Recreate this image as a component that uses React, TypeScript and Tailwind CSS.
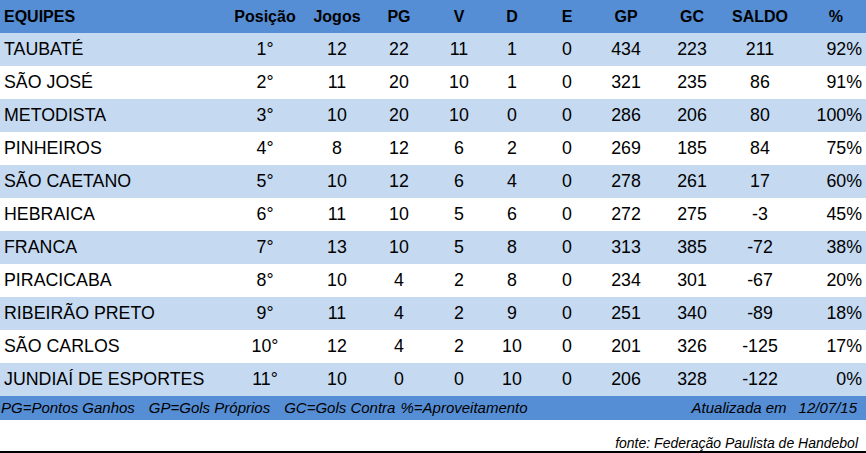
const rows = [
  ["TAUBATÉ", "1°", "12", "22", "11", "1", "0", "434", "223", "211", "92%"],
  ["SÃO JOSÉ", "2°", "11", "20", "10", "1", "0", "321", "235", "86", "91%"],
  ["METODISTA", "3°", "10", "20", "10", "0", "0", "286", "206", "80", "100%"],
  ["PINHEIROS", "4°", "8", "12", "6", "2", "0", "269", "185", "84", "75%"],
  ["SÃO CAETANO", "5°", "10", "12", "6", "4", "0", "278", "261", "17", "60%"],
  ["HEBRAICA", "6°", "11", "10", "5", "6", "0", "272", "275", "-3", "45%"],
  ["FRANCA", "7°", "13", "10", "5", "8", "0", "313", "385", "-72", "38%"],
  ["PIRACICABA", "8°", "10", "4", "2", "8", "0", "234", "301", "-67", "20%"],
  ["RIBEIRÃO PRETO", "9°", "11", "4", "2", "9", "0", "251", "340", "-89", "18%"],
  ["SÃO CARLOS", "10°", "12", "4", "2", "10", "0", "201", "326", "-125", "17%"],
  ["JUNDIAÍ DE ESPORTES", "11°", "10", "0", "0", "10", "0", "206", "328", "-122", "0%"],
];

const headers = ["Posição", "Jogos", "PG", "V", "D", "E", "GP", "GC", "SALDO"];

const grid =
  "grid grid-cols-[230px_70px_74px_50px_70px_36px_74px_44px_88px_48px_1fr]";

export default function App() {
  return (
    <div className="w-[866px] h-[453px] bg-white text-black font-['Liberation_Sans',Arial,sans-serif] overflow-hidden">
      {/* cabeçalho */}
      <div className={`${grid} h-[33px] bg-[#558ed5] text-[16px] font-bold items-center`}>
        <div className="pl-1">EQUIPES</div>
        {headers.map((h) => (
          <div key={h} className="flex justify-center whitespace-nowrap">
            {h}
          </div>
        ))}
        <div className="flex justify-end pr-[23px]">%</div>
      </div>

      {rows.map((r, i) => (
        <div
          key={r[0]}
          className={`${grid} h-[33px] items-center text-[17.8px] ${
            i % 2 === 0 ? "bg-[#c5d9f1]" : "bg-white"
          }`}
        >
          <div className="pl-1 whitespace-nowrap">{r[0]}</div>
          {r.slice(1, 10).map((v, j) => (
            <div key={j} className="flex justify-center whitespace-nowrap">
              {v}
            </div>
          ))}
          <div className="flex justify-end pr-1">{r[10]}</div>
        </div>
      ))}

      {/* legenda */}
      <div className="h-[24px] bg-[#558ed5] flex items-center text-[15px] italic whitespace-nowrap">
        <span className="pl-[1px]">PG=Pontos Ganhos</span>
        <span className="ml-[14px]">GP=Gols Próprios</span>
        <span className="ml-[14px]">GC=Gols Contra</span>
        <span className="ml-[5px]">%=Aproveitamento</span>
        <span className="ml-auto">Atualizada em</span>
        <span className="ml-[12px] pr-[9px]">12/07/15</span>
      </div>

      <div className="h-[33px] border-b-2 border-black flex items-end justify-end pr-[8px]">
        <span className="text-[14px] italic leading-4">fonte: Federação Paulista de Handebol</span>
      </div>
    </div>
  );
}
